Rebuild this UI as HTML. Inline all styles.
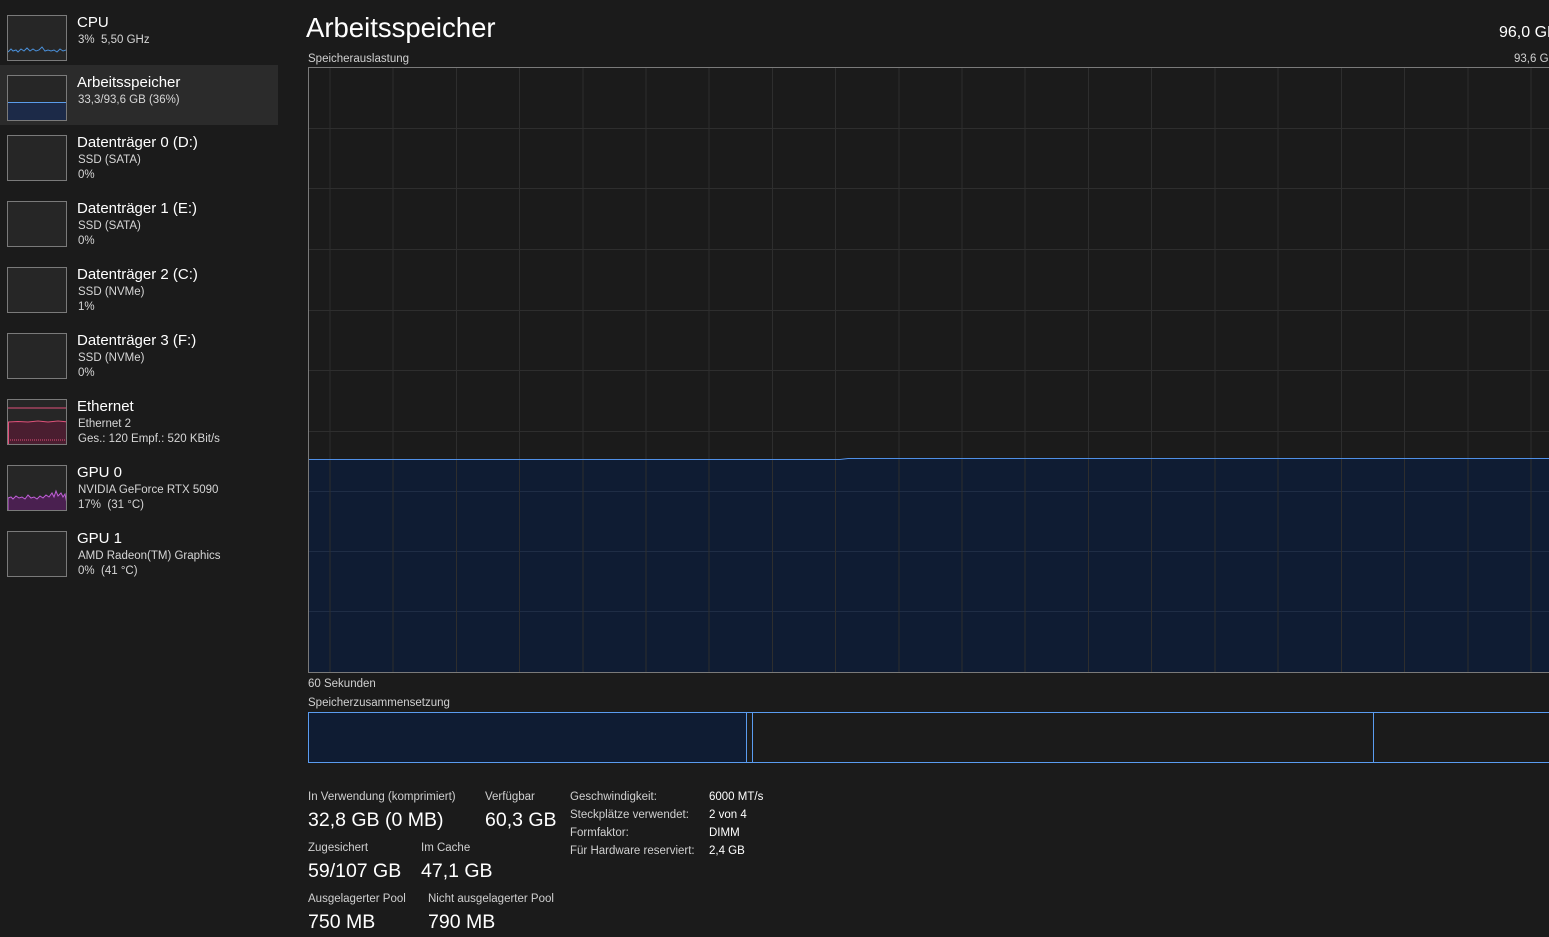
<!DOCTYPE html>
<html><head><meta charset="utf-8"><style>
*{margin:0;padding:0;box-sizing:border-box}
body{width:1549px;height:937px;background:#1b1b1b;overflow:hidden;position:relative;font-family:"Segoe UI","Liberation Sans",sans-serif;color:#fff}
.t{position:absolute;white-space:nowrap}
.t,.n,.s{transform:translateY(3px)}
.item{position:absolute;left:0;width:278px;height:60px}
.thumb{position:absolute;left:7px;width:60px;height:46px;border:1px solid #7a7a7a;background:#262626;overflow:hidden}
.n{position:absolute;left:77px;font-size:15px;color:#fff}
.s{position:absolute;left:78px;font-size:11.5px;color:#d6d6d6}
.lbl{font-size:11.5px;color:#d0d0d0}
.big{font-size:19.5px;color:#fff}
.k{font-size:11.5px;color:#d0d0d0}
.v{font-size:11.5px;color:#fff}
</style></head><body>
<div class="item" style="top:65px;background:#2b2b2b"></div>

<div class="thumb" style="top:15px"><svg width="60" height="46"><path d="M0 36 L3 33 5 35 8 34 10 36 13 33 16 35 19 32 22 35 25 33 28 35 31 34 34 31 37 35 40 34 43 35 46 34 49 36 52 33 55 35 58 34 60 35" fill="none" stroke="#4a8fd8" stroke-width="1"/></svg></div>
<div class="n" style="top:11px">CPU</div><div class="s" style="top:31px">3%&nbsp; 5,50 GHz</div>

<div class="thumb" style="top:75px"><div style="position:absolute;left:0;right:0;top:26px;bottom:0;background:#1c2a48;border-top:1px solid #5a9cea"></div></div>
<div class="n" style="top:71px">Arbeitsspeicher</div><div class="s" style="top:91px">33,3/93,6 GB (36%)</div>

<div class="thumb" style="top:135px"></div>
<div class="n" style="top:131px">Datenträger 0 (D:)</div><div class="s" style="top:151px">SSD (SATA)</div><div class="s" style="top:166px">0%</div>
<div class="thumb" style="top:201px"></div>
<div class="n" style="top:197px">Datenträger 1 (E:)</div><div class="s" style="top:217px">SSD (SATA)</div><div class="s" style="top:232px">0%</div>
<div class="thumb" style="top:267px"></div>
<div class="n" style="top:263px">Datenträger 2 (C:)</div><div class="s" style="top:283px">SSD (NVMe)</div><div class="s" style="top:298px">1%</div>
<div class="thumb" style="top:333px"></div>
<div class="n" style="top:329px">Datenträger 3 (F:)</div><div class="s" style="top:349px">SSD (NVMe)</div><div class="s" style="top:364px">0%</div>

<div class="thumb" style="top:399px"><svg width="60" height="46"><rect x="0" y="22" width="60" height="24" fill="#4a1e30"/><line x1="0" y1="8" x2="60" y2="8" stroke="#e0507a"/><path d="M0 22 L10 21.5 20 22 30 21 40 22 50 21 60 22" stroke="#e0507a" fill="none"/><line x1="0" y1="40" x2="60" y2="40" stroke="#e0507a" stroke-dasharray="1 1"/><line x1="0.5" y1="22" x2="0.5" y2="46" stroke="#e0507a"/></svg></div>
<div class="n" style="top:395px">Ethernet</div><div class="s" style="top:415px">Ethernet 2</div><div class="s" style="top:430px">Ges.: 120 Empf.: 520 KBit/s</div>

<div class="thumb" style="top:465px"><svg width="60" height="46"><path d="M0 32 L3 31 5 33 8 30 11 32 14 31 17 33 20 29 23 32 26 31 29 33 32 30 35 32 38 29 41 31 44 27 46 31 48 25 50 30 53 27 55 31 57 28 59 38 60 38 L60 46 L0 46Z" fill="#4a2050" stroke="#c060d8" stroke-width="1"/></svg></div>
<div class="n" style="top:461px">GPU 0</div><div class="s" style="top:481px">NVIDIA GeForce RTX 5090</div><div class="s" style="top:496px">17%&nbsp; (31 °C)</div>

<div class="thumb" style="top:531px"></div>
<div class="n" style="top:527px">GPU 1</div><div class="s" style="top:547px">AMD Radeon(TM) Graphics</div><div class="s" style="top:562px">0%&nbsp; (41 °C)</div>

<div class="t" style="left:306px;top:9px;font-size:27.5px;color:#fff">Arbeitsspeicher</div>
<div class="t" style="left:1499px;top:21px;font-size:16px">96,0 GB</div>
<div class="t lbl" style="left:308px;top:50px">Speicherauslastung</div>
<div class="t lbl" style="left:1514px;top:50px">93,6 GB</div>

<svg style="position:absolute;left:0;top:0" width="1549" height="937">
<g stroke="#2e2e2e" stroke-width="1">
<line x1="308" y1="128.5" x2="1549" y2="128.5"/><line x1="308" y1="188.5" x2="1549" y2="188.5"/><line x1="308" y1="249.5" x2="1549" y2="249.5"/><line x1="308" y1="310.5" x2="1549" y2="310.5"/><line x1="308" y1="370.5" x2="1549" y2="370.5"/><line x1="308" y1="431.5" x2="1549" y2="431.5"/>
</g>
<path d="M308.5 459.5 L840 459.5 848 458.5 1549 458.5 L1549 672 L308.5 672Z" fill="#0f1c33"/>
<g stroke="#1f2d45" stroke-width="1">
<line x1="308" y1="491.5" x2="1549" y2="491.5"/><line x1="308" y1="551.5" x2="1549" y2="551.5"/><line x1="308" y1="611.5" x2="1549" y2="611.5"/>
</g>
<g stroke="#2e2e2e" stroke-width="1">
<line x1="330" y1="68" x2="330" y2="672"/><line x1="393" y1="68" x2="393" y2="672"/><line x1="456.5" y1="68" x2="456.5" y2="672"/><line x1="519.5" y1="68" x2="519.5" y2="672"/><line x1="583" y1="68" x2="583" y2="672"/><line x1="646" y1="68" x2="646" y2="672"/><line x1="709" y1="68" x2="709" y2="672"/><line x1="772.5" y1="68" x2="772.5" y2="672"/><line x1="835.5" y1="68" x2="835.5" y2="672"/><line x1="899" y1="68" x2="899" y2="672"/><line x1="962" y1="68" x2="962" y2="672"/><line x1="1025" y1="68" x2="1025" y2="672"/><line x1="1088.5" y1="68" x2="1088.5" y2="672"/><line x1="1151.5" y1="68" x2="1151.5" y2="672"/><line x1="1215" y1="68" x2="1215" y2="672"/><line x1="1278" y1="68" x2="1278" y2="672"/><line x1="1341.5" y1="68" x2="1341.5" y2="672"/><line x1="1404.5" y1="68" x2="1404.5" y2="672"/><line x1="1468" y1="68" x2="1468" y2="672"/><line x1="1531" y1="68" x2="1531" y2="672"/>
</g>
<path d="M308.5 459.5 L840 459.5 848 458.5 1549 458.5" fill="none" stroke="#4f8fe6" stroke-width="1"/>
<rect x="308.5" y="67.5" width="1250" height="605" fill="none" stroke="#7a7a7a"/>
<rect x="308.5" y="712.5" width="1250" height="50" fill="none" stroke="#5a9cf0"/>
<rect x="309" y="713" width="438" height="49" fill="#0f1c33"/>
<line x1="746.5" y1="712" x2="746.5" y2="763" stroke="#5a9cf0"/>
<line x1="752.5" y1="712" x2="752.5" y2="763" stroke="#5a9cf0"/>
<line x1="1373.5" y1="712" x2="1373.5" y2="763" stroke="#5a9cf0"/>
</svg>
<div class="t lbl" style="left:308px;top:675px">60 Sekunden</div>
<div class="t lbl" style="left:308px;top:694px">Speicherzusammensetzung</div>

<div class="t lbl" style="left:308px;top:788px">In Verwendung (komprimiert)</div>
<div class="t big" style="left:308px;top:806px">32,8 GB (0 MB)</div>
<div class="t lbl" style="left:485px;top:788px">Verfügbar</div>
<div class="t big" style="left:485px;top:806px">60,3 GB</div>
<div class="t lbl" style="left:308px;top:839px">Zugesichert</div>
<div class="t big" style="left:308px;top:857px">59/107 GB</div>
<div class="t lbl" style="left:421px;top:839px">Im Cache</div>
<div class="t big" style="left:421px;top:857px">47,1 GB</div>
<div class="t lbl" style="left:308px;top:890px">Ausgelagerter Pool</div>
<div class="t big" style="left:308px;top:908px">750 MB</div>
<div class="t lbl" style="left:428px;top:890px">Nicht ausgelagerter Pool</div>
<div class="t big" style="left:428px;top:908px">790 MB</div>

<div class="t k" style="left:570px;top:788px">Geschwindigkeit:</div><div class="t v" style="left:709px;top:788px">6000 MT/s</div>
<div class="t k" style="left:570px;top:806px">Steckplätze verwendet:</div><div class="t v" style="left:709px;top:806px">2 von 4</div>
<div class="t k" style="left:570px;top:824px">Formfaktor:</div><div class="t v" style="left:709px;top:824px">DIMM</div>
<div class="t k" style="left:570px;top:842px">Für Hardware reserviert:</div><div class="t v" style="left:709px;top:842px">2,4 GB</div>
</body></html>
